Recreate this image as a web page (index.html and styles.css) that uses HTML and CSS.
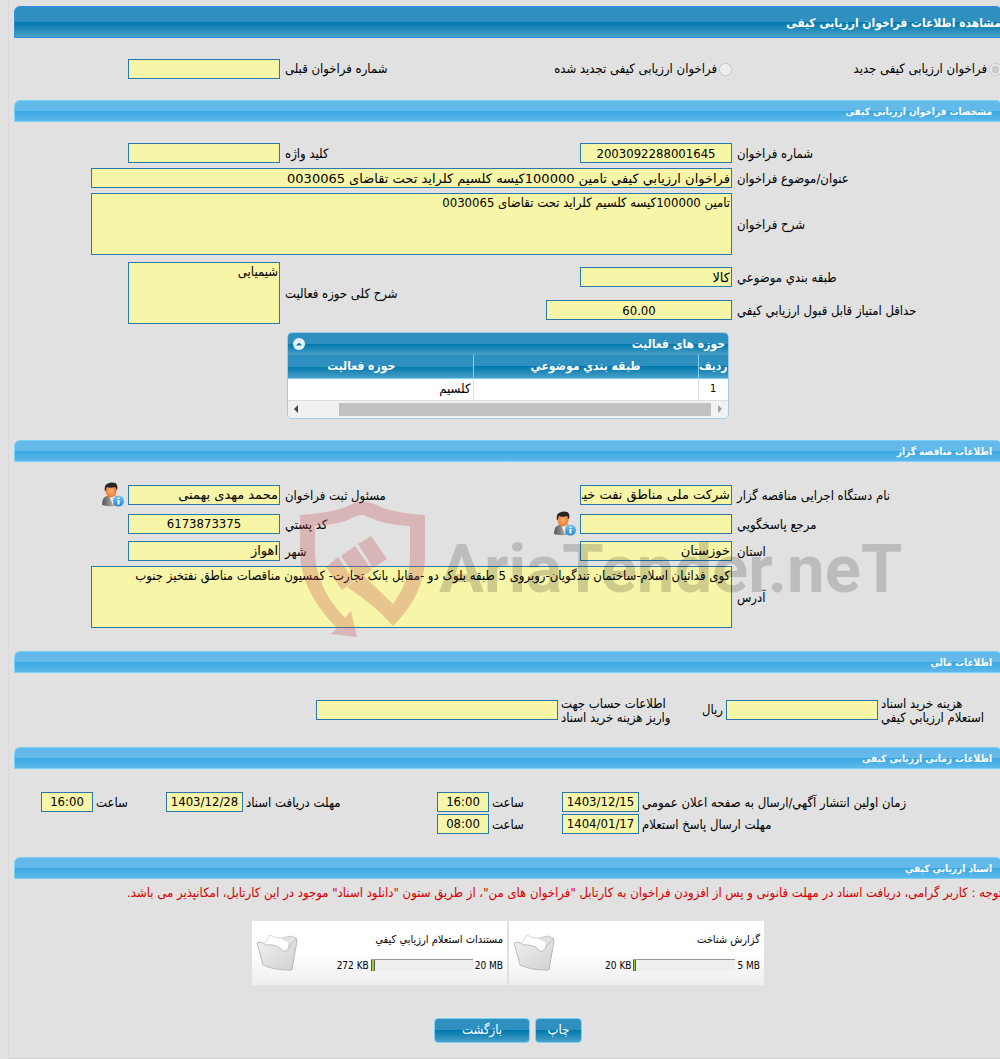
FILE: index.html
```html
<!DOCTYPE html>
<html lang="fa" dir="rtl">
<head>
<meta charset="utf-8">
<title>مشاهده اطلاعات فراخوان ارزیابی کیفی</title>
<link rel="stylesheet" href="styles.css">
</head>
<body>
<svg class="defs" aria-hidden="true">
  <defs>
    <linearGradient id="suit" x1="0" y1="0" x2="1" y2="0"><stop offset="0" stop-color="#555"/><stop offset=".6" stop-color="#aaa"/><stop offset="1" stop-color="#777"/></linearGradient>
    <radialGradient id="face"><stop offset="0" stop-color="#ffb070"/><stop offset="1" stop-color="#e87a35"/></radialGradient>
    <linearGradient id="badge" x1="0" y1="0" x2="0" y2="1"><stop offset="0" stop-color="#7cc4f2"/><stop offset="1" stop-color="#1f86d6"/></linearGradient>
    <linearGradient id="fold" x1="0" y1="0" x2="1" y2="1"><stop offset="0" stop-color="#f2f2f2"/><stop offset="1" stop-color="#cfcfcf"/></linearGradient>
    <symbol id="user" viewBox="0 0 23 25">
      <path d="M1 23Q1 15 6 14L14 13Q19 15 19 23Q10 25.500 1 23Z" fill="url(#suit)"/>
      <path d="M8 14L12 23L14 14Z" fill="#f3f3f3"/>
      <ellipse cx="10" cy="9" rx="5.500" ry="6.500" fill="url(#face)"/>
      <path d="M3.800 8.500Q3 2.500 7 1.500Q10-.2 14.500 1Q17.500 3 15.800 8.500Q15 6 14 5Q9 6.500 6 5Q5 6 4.800 9Z" fill="#262626"/>
      <circle cx="17.500" cy="19" r="5.500" fill="url(#badge)"/>
      <path d="M16.500 15.500h2v1.500h-2zM16.500 18h2v4.500h-2z" fill="#fff"/>
    </symbol>
    <symbol id="folder" viewBox="0 0 42 38">
      <path d="M26 4L35 2L40 4V8L36 36L28 22Z" fill="#e3e3e3" stroke="#c8c8c8"/>
      <path d="M8 10L14 1Q18 4 25 4L33 8L32 23L12 17Z" fill="#fff" stroke="#d8d8d8"/>
      <path d="M1 9Q4 7 7 9L10 11Q20 10 25 15Q28 19 31 16L36 9Q39 7 40 4L41 7L36 35Q35 37 32 36Q18 36 7 31Q6 27 5 23Z" fill="url(#fold)" stroke="#bbb"/>
    </symbol>
  </defs>
</svg>
<main class="page">
  <h1 class="title-bar">مشاهده اطلاعات فراخوان ارزیابی کیفی</h1>
  <div class="kinds">
    <label class="kind"><input type="radio" name="kind" checked disabled>فراخوان ارزیابی کیفی جدید</label>
    <label class="kind"><input type="radio" name="kind" disabled>فراخوان ارزیابی کیفی تجدید شده</label>
    <label class="prev" for="prev">شماره فراخوان قبلی</label>
    <input class="field" id="prev" readonly>
  </div>

  <h2 class="bar">مشخصات فراخوان ارزیابی کیفی</h2>
  <div class="form">
    <label for="num">شماره فراخوان</label><input class="field num" id="num" value="2003092288001645" readonly>
    <label for="key">کلید واژه</label><input class="field" id="key" readonly>
    <label for="subject">عنوان/موضوع فراخوان</label><input class="field wide" id="subject" value="فراخوان ارزيابي كيفي تامین 100000کیسه کلسیم کلراید تحت تقاضای 0030065" readonly>
    <label for="desc">شرح فراخوان</label><textarea class="field wide area" id="desc" readonly>تامین 100000کیسه کلسیم کلراید تحت تقاضای 0030065</textarea>
  </div>
  <div class="form scope">
    <label for="cat">طبقه بندي موضوعي</label><input class="field" id="cat" value="کالا" readonly>
    <label class="tall" for="act">شرح کلی حوزه فعالیت</label><textarea class="field area tall" id="act" readonly>شیمیایی</textarea>
    <label for="min">حداقل امتیاز قابل قبول ارزيابي كيفي</label><input class="field num medium" id="min" value="60.00" readonly>
  </div>
  <section class="grid-box">
    <div class="grid-title">حوزه های فعالیت
      <button class="collapse" type="button" aria-label="بستن"><svg viewBox="0 0 12 12"><path d="M3 7.500L6 4.500L9 7.500Z"/></svg></button>
    </div>
    <table>
      <thead><tr><th class="c-row">ردیف</th><th class="c-cat">طبقه بندي موضوعي</th><th>حوزه فعالیت</th></tr></thead>
      <tbody><tr><td class="center">1</td><td></td><td>کلسیم</td></tr></tbody>
    </table>
    <div class="scroll"><svg viewBox="0 0 4 8"><path class="off" d="M0 0L4 4L0 8Z"/></svg><span class="thumb"></span><svg viewBox="0 0 4 8"><path d="M4 0L0 4L4 8Z"/></svg></div>
  </section>

  <h2 class="bar">اطلاعات مناقصه گزار</h2>
  <div class="form org">
    <label for="org">نام دستگاه اجرایی مناقصه گزار</label><input class="field" id="org" value="شرکت ملی مناطق نفت خیز جنوب" readonly>
    <label for="reg">مسئول ثبت فراخوان</label><span class="with-icon"><input class="field" id="reg" value="محمد مهدی بهمنی" readonly><svg class="user"><use href="#user"/></svg></span>
    <label for="ref">مرجع پاسخگويي</label><span class="with-icon"><input class="field" id="ref" readonly><svg class="user"><use href="#user"/></svg></span>
    <label for="zip">کد پستي</label><input class="field num" id="zip" value="6173873375" readonly>
    <label for="prov">استان</label><input class="field" id="prov" value="خوزستان" readonly>
    <label for="city">شهر</label><input class="field" id="city" value="اهواز" readonly>
    <label for="addr">آدرس</label><textarea class="field wide area" id="addr" readonly>کوی فدائیان اسلام-ساختمان تندگویان-روبروی 5 طبقه بلوک دو -مقابل بانک تجارت- کمسیون مناقصات مناطق نفتخیز جنوب</textarea>
    <div class="watermark" dir="ltr" aria-hidden="true">
      <svg viewBox="0 0 126 136"><path d="M0 14Q36 12 52 3Q62-2 74 3Q90 12 125 14V58Q124 94 93 125Q76 105 47 86L63 74L93 103Q111 78 110 54V25Q85 24 68 16Q61 12 54 16Q40 24 15 25V52Q16 87 45 117L51 110L57 136L31 133L37 127Q2 92 0 54Z"/><path d="M26 66L38 56L54 80L42 89ZM41 55L55 45L72 69L58 79ZM58 43L71 35L87 58L73 67Z"/></svg>
      <span>AriaTender.neT</span>
    </div>
  </div>

  <h2 class="bar">اطلاعات مالي</h2>
  <div class="money">
    <label for="cost">هزینه خرید اسناد<br>استعلام ارزيابي كيفي</label><input class="field" id="cost" readonly><span class="unit">ریال</span>
    <label for="account">اطلاعات حساب جهت<br>واریز هزینه خرید اسناد</label><input class="field account" id="account" readonly>
  </div>

  <h2 class="bar">اطلاعات زمانی ارزیابی کیفی</h2>
  <div class="times">
    <label for="d1">زمان اولین انتشار آگهي/ارسال به صفحه اعلان عمومي</label><input class="field num" id="d1" value="1403/12/15" readonly>
    <label for="t1">ساعت</label><input class="field num" id="t1" value="16:00" readonly>
    <label for="d2">مهلت دریافت اسناد</label><input class="field num" id="d2" value="1403/12/28" readonly>
    <label for="t2">ساعت</label><input class="field num" id="t2" value="16:00" readonly>
    <label class="first" for="d3">مهلت ارسال پاسخ استعلام</label><input class="field num" id="d3" value="1404/01/17" readonly>
    <label for="t3">ساعت</label><input class="field num" id="t3" value="08:00" readonly>
  </div>

  <h2 class="bar">اسناد ارزيابي كيفي</h2>
  <p class="notice">توجه : کاربر گرامی، دریافت اسناد در مهلت قانونی و پس از افزودن فراخوان به کارتابل "فراخوان های من"، از طریق ستون "دانلود اسناد" موجود در این کارتابل، امکانپذیر می باشد.</p>
  <div class="files">
    <article class="file"><div class="info"><h3>گزارش شناخت</h3><div class="size"><span dir="ltr">5 MB</span><span class="meter"><i class="used small"></i></span><span dir="ltr">20 KB</span></div></div><svg class="folder"><use href="#folder"/></svg></article>
    <article class="file"><div class="info"><h3>مستندات استعلام ارزيابي كيفي</h3><div class="size"><span dir="ltr">20 MB</span><span class="meter"><i class="used"></i></span><span dir="ltr">272 KB</span></div></div><svg class="folder"><use href="#folder"/></svg></article>
  </div>
  <div class="actions"><button class="btn" type="button">چاپ</button><button class="btn back" type="button">بازگشت</button></div>
</main>
</body>
</html>
```
FILE: styles.css
```css
* { box-sizing: border-box; }
body {
  margin: 0;
  background: #e1e1e1;
  color: #000;
  font: 13px/14px "DejaVu Sans Condensed", "DejaVu Sans", sans-serif;
  overflow-x: clip;
}
.defs { position: absolute; width: 0; height: 0; }
.page {
  margin: 0 -2px 0 8px;
  padding: 6px 0 15px 5px;
  border-left: 1px solid #dadada;
  border-bottom: 1px solid #cfcfcf;
}
h1, h2, h3, p { margin: 0; }
.title-bar {
  height: 32px;
  border: 1px solid #2b8fe8;
  border-radius: 6px 6px 0 0;
  background: linear-gradient(#2f90bf 50%, #0078ae 50%, #4a9fc6);
  color: #fff;
  font-size: 12px;
  line-height: 32px;
}
.bar {
  height: 22px;
  padding: 0 9px;
  border: 1px solid #79d2f5;
  border-radius: 6px 6px 0 0;
  background: linear-gradient(#63baea 50%, #38a7e2 50%, #5fb8ea);
  color: #fff;
  font-size: 10px;
  line-height: 21px;
}
.field {
  width: 152px;
  height: 20px;
  margin: 0;
  padding: 1px;
  border: 1px solid #2779aa;
  border-radius: 0;
  background: #f7f5a7;
  color: #000;
  font: 13px/16px "DejaVu Sans", sans-serif;
  outline: 0;
}
.num { text-align: center; }
.num, .area { font-family: "DejaVu Sans Condensed", "DejaVu Sans", sans-serif; }
.medium { width: 186px; }
.area { display: block; height: 62px; resize: none; overflow: hidden; }
.wide { width: 641px; grid-column: span 3; }

.kinds {
  display: grid;
  grid-template-columns: 265fr 337fr 105fr 266fr;
  align-items: center;
  height: 62px;
  column-gap: 5px;
}
.prev { text-align: left; white-space: nowrap; }
.kind { display: flex; align-items: center; gap: 2px; white-space: nowrap; }
.kind input { width: 13px; height: 13px; margin: 0; }

.form, .times { display: grid; align-items: center; }
.form {
  position: relative;
  grid-template-columns: 265fr 192fr 250fr 266fr;
  gap: 5px;
  padding-top: 21px;
}
.form > label, .times > label { padding-top: 2px; text-align: left; white-space: nowrap; }
.scope { padding-top: 7px; grid-template-rows: 30px 28px; row-gap: 4px; }
.tall { grid-row: 1 / 3; }
label.tall { grid-column: 3; }
textarea.tall { grid-column: 4; }
.with-icon { display: flex; align-items: center; gap: 4px; }
.user { width: 23px; height: 25px; flex: none; }
.org { grid-template-rows: 24px 24px 20px 62px; margin-bottom: 23px; }

.grid-box {
  width: 442px;
  margin: 8px 273px 21px 0;
  border: 1px solid #a3cbe8;
  border-radius: 5px;
  overflow: hidden;
  background: #fff;
}
.grid-title {
  display: flex;
  justify-content: space-between;
  align-items: center;
  height: 22px;
  padding: 0 3px 0 5px;
  background: linear-gradient(#2f90bf 50%, #0078ae 50%, #4a9fc6);
  color: #fff;
  font-size: 12px;
  font-weight: bold;
}
.collapse { width: 12px; height: 12px; padding: 0; border: 0; border-radius: 6px; background: #e4f1fa; }
.collapse svg { display: block; fill: #0078ae; }
table { width: 100%; border-collapse: collapse; table-layout: fixed; }
.c-row { width: 30px; }
.c-cat { width: 225px; }
th {
  height: 23px;
  padding: 0;
  border-bottom: 1px solid #79d2f5;
  background: linear-gradient(#2f90bf 50%, #0078ae 50%, #4a9fc6);
  color: #fff;
  font-size: 12px;
  white-space: nowrap;
}
th + th { border-right: 1px solid #79d2f5; }
th:last-child { padding-right: 38px; }
td { height: 22px; padding: 0 2px; border-bottom: 1px solid #ddd; }
td + td { border-right: 1px solid #ddd; }
.center { text-align: center; font-size: 11px; }
.scroll { display: flex; align-items: center; height: 17px; padding: 0 6px; background: #f1f1f1; }
.scroll svg { width: 4px; height: 8px; fill: #444; flex: none; }
.scroll .off { fill: #a0a0a0; }
.thumb { flex: 1; height: 13px; margin: 0 7px 0 41px; background: #c1c1c1; }

.watermark {
  position: absolute;
  left: 286px;
  top: 39px;
  display: flex;
  align-items: center;
  gap: 13px;
  pointer-events: none;
}
.watermark svg { width: 126px; height: 136px; fill: #c44a52; opacity: .28; }
.watermark span { color: #000; opacity: .16; font: bold 67px/90px Roboto, sans-serif; }

.money { display: flex; align-items: center; gap: 3px; height: 74px; padding-right: 12px; }
.money label { width: 109px; padding-top: 2px; text-align: left; white-space: nowrap; }
.unit { width: 48px; }
.money .unit + label { width: 111px; }
.account { width: 242px; }

.times {
  grid-template-columns: 360fr 77px 67fr 52px 188fr 77px 67fr 52px 24fr;
  gap: 2px 3px;
  padding: 23px 0;
}
.times .field { width: 100%; }
.first { grid-column: 1; }

.notice { padding-top: 7px; color: #d40000; white-space: nowrap; }
.files { display: flex; justify-content: center; gap: 2px; padding-top: 21px; }
.file {
  display: flex;
  justify-content: space-between;
  align-items: center;
  width: 255px;
  height: 64px;
  padding: 0 4px;
  background: linear-gradient(#fff 50%, #eee);
}
.folder { width: 42px; height: 38px; }
.file h3 { font-size: 11px; font-weight: normal; }
.info { display: grid; gap: 12px; }
.size { display: flex; gap: 2px; font-size: 10px; }
.meter { width: 102px; height: 12px; border-top: 1px solid #999; background: #eee; direction: ltr; }
.used { display: block; width: 4px; height: 11px; background: #9acd32; border: 1px solid #555; border-width: 0 1px; }
.small { width: 3px; }

.actions { display: flex; justify-content: center; gap: 5px; padding-top: 33px; }
.btn {
  width: 47px;
  height: 25px;
  padding: 0;
  border: 1px solid #79d2f5;
  border-radius: 4px;
  background: linear-gradient(#2f90bf 50%, #0078ae 50%, #4a9fc6);
  color: #fff;
  font: 13px/20px "DejaVu Sans Condensed", "DejaVu Sans", sans-serif;
}
.back { width: 96px; }
```
